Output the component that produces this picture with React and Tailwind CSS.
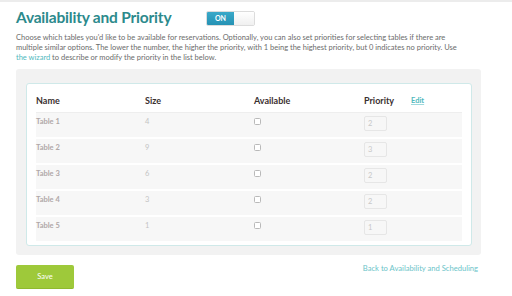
const rows = [
  { name: 'Table 1', size: 4, priority: 2 },
  { name: 'Table 2', size: 9, priority: 3 },
  { name: 'Table 3', size: 6, priority: 2 },
  { name: 'Table 4', size: 3, priority: 2 },
  { name: 'Table 5', size: 1, priority: 1 },
];

export default function App() {
  return (
    <div
      className="w-[512px] h-[296px] bg-white overflow-hidden border-t-2 border-[#ececec]"
      style={{ fontFamily: 'Lato, "Open Sans", sans-serif' }}
    >
      <div className="px-4">
        {/* Title + toggle */}
        <div className="flex items-center h-[30px] pt-[2px]">
          <h1 className="w-[190px] text-[15.5px] font-bold text-[#2c8a8c] leading-none tracking-[-0.2px]">
            Availability and Priority
          </h1>
          <div className="flex h-[15px] w-[49px] rounded-[2px] border border-[#dcdcdc] overflow-hidden">
            <div className="w-[27px] bg-gradient-to-b from-[#3aa9c9] to-[#2592b4] text-white text-[7px] font-bold flex items-center justify-center">
              ON
            </div>
            <div className="flex-1 bg-gradient-to-b from-white to-[#f0f0f0]" />
          </div>
        </div>

        {/* Description */}
        <p className="mt-[1px] text-[7.5px] leading-[10px] text-[#6b6b6b] w-[480px]">
          Choose which tables you'd like to be available for reservations. Optionally, you can also set priorities for selecting tables if there are
          <br />
          multiple similar options. The lower the number, the higher the priority, with 1 being the highest priority, but 0 indicates no priority. Use
          <br />
          <span className="text-[#4fb9be]">the wizard</span> to describe or modify the priority in the list below.
        </p>

        {/* Panel */}
        <div className="mt-[6px] w-[465px] h-[186px] bg-[#f2f2f2] rounded-[3px] pt-[14px] pl-[10px]">
          <div className="w-[446px] h-[163px] bg-white border border-[#cfe9e9] rounded-[3px] pl-[9px] pt-[7px]">
            <div className="flex items-center h-[20px] text-[9px] font-bold text-[#3a3030]">
              <div className="w-[109px]">Name</div>
              <div className="w-[109px]">Size</div>
              <div className="w-[110px]">Available</div>
              <div className="w-[47px]">Priority</div>
              <div className="text-[7.5px] text-[#4fb9be] underline decoration-[#9fd9dc]">Edit</div>
            </div>
            <div className="mt-[1px] w-[426px] border-t border-[#eeeeee] flex flex-col gap-[2px]">
              {rows.map((r) => (
                <div key={r.name} className="flex h-[24px] bg-[#f7f7f7] text-[7.5px] text-[#b0a8a8] pt-[3px]">
                  <div className="w-[109px] font-bold">{r.name}</div>
                  <div className="w-[109px] text-[#c4c4c4]">{r.size}</div>
                  <div className="w-[110px] pt-[2px]">
                    <div className="w-[7px] h-[7px] border border-[#b9b9b9] rounded-[1.5px] bg-white" />
                  </div>
                  <div className="w-[23px] h-[15px] border border-[#e6e6e6] rounded-[2px] bg-[#f7f7f7] text-[#c8c8c8] pl-[3px] flex items-center">
                    {r.priority}
                  </div>
                </div>
              ))}
            </div>
          </div>
        </div>

        {/* Footer */}
        <div className="mt-[10px] flex items-start w-[462px]">
          <button className="w-[58px] h-[24px] bg-[#9ec93a] rounded-[2px] border-b border-[#8fba2f] text-white text-[7.5px]">
            Save
          </button>
          <a className="ml-auto mt-[-2px] text-[7.6px] text-[#6cc4c9]">Back to Availability and Scheduling</a>
        </div>
      </div>
    </div>
  );
}
